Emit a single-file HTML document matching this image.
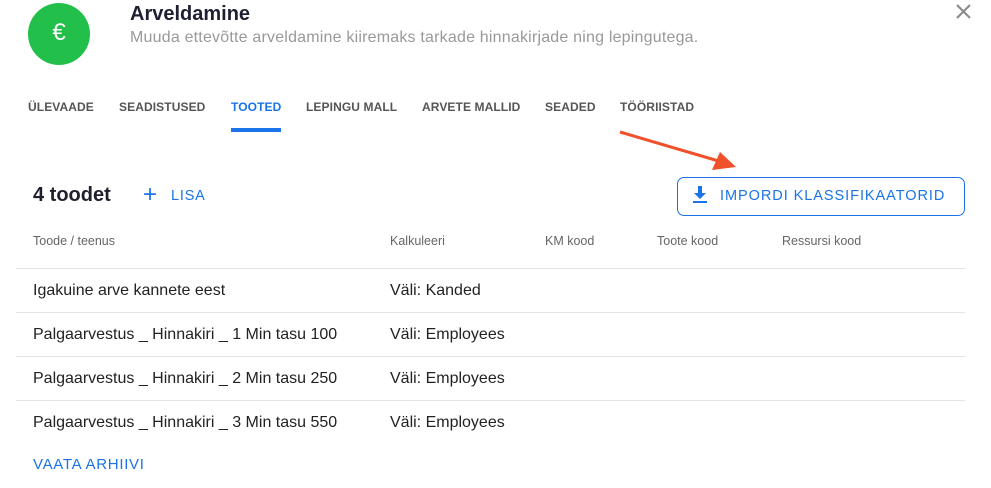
<!DOCTYPE html>
<html><head><meta charset="utf-8"><style>
*{margin:0;padding:0;box-sizing:border-box}
body{width:991px;height:488px;background:#fff;font-family:"Liberation Sans",sans-serif;position:relative;overflow:hidden;color:#1f1f2e}
.a{position:absolute;white-space:nowrap}
.tab{top:100px;font-size:12px;font-weight:bold;color:#555;letter-spacing:0.1px}
.th{top:234px;font-size:12.5px;color:#666}
.row{position:absolute;left:16px;width:949px;height:44px;border-top:1px solid #e4e4e4;font-size:16px;color:#222}
.row span{position:absolute;top:13px}
</style></head><body>
<div class="a" style="left:28px;top:3px;width:62px;height:62px;border-radius:50%;background:#22c04a;color:#fff;font-size:24px;text-align:center;line-height:60px">€</div>
<div class="a" style="left:130px;top:3px;font-size:20px;font-weight:bold;color:#1f1f33">Arveldamine</div>
<div class="a" style="left:130px;top:29px;font-size:16px;letter-spacing:0.2px;color:#999">Muuda ettevõtte arveldamine kiiremaks tarkade hinnakirjade ning lepingutega.</div>
<svg class="a" style="left:956px;top:4px" width="15" height="15"><path d="M1 1L14 14M14 1L1 14" stroke="#888" stroke-width="2"/></svg>
<div class="a tab" style="left:28px">ÜLEVAADE</div>
<div class="a tab" style="left:119px">SEADISTUSED</div>
<div class="a tab" style="left:231px;color:#1a73e8">TOOTED</div>
<div class="a" style="left:231px;top:128px;width:50px;height:4px;background:#1a73e8"></div>
<div class="a tab" style="left:306px">LEPINGU MALL</div>
<div class="a tab" style="left:422px">ARVETE MALLID</div>
<div class="a tab" style="left:545px">SEADED</div>
<div class="a tab" style="left:620px">TÖÖRIISTAD</div>
<svg class="a" style="left:0;top:0" width="991" height="488"><line x1="620" y1="132" x2="722" y2="162" stroke="#f0502a" stroke-width="3"/><polygon points="736,167 712,170 720,152" fill="#f0502a"/></svg>
<div class="a" style="left:33px;top:184px;font-size:20px;font-weight:bold">4 toodet</div>
<div class="a" style="left:143px;top:182px;font-size:24px;color:#1a73e8;line-height:26px">+</div>
<div class="a" style="left:171px;top:188px;font-size:14.5px;color:#1a73e8;letter-spacing:0.8px">LISA</div>
<div class="a" style="left:677px;top:177px;width:288px;height:39px;border:1px solid #1a73e8;border-radius:7px"></div>
<svg class="a" style="left:692px;top:186px" width="16" height="18"><path d="M6 0h4v7h4l-6 6-6-6h4z" fill="#1a73e8"/><rect x="1" y="15" width="14" height="2" fill="#1a73e8"/></svg>
<div class="a" style="left:720px;top:188px;font-size:14.5px;color:#1a73e8;letter-spacing:0.95px">IMPORDI KLASSIFIKAATORID</div>
<div class="a th" style="left:33px">Toode / teenus</div>
<div class="a th" style="left:390px">Kalkuleeri</div>
<div class="a th" style="left:545px">KM kood</div>
<div class="a th" style="left:657px">Toote kood</div>
<div class="a th" style="left:782px">Ressursi kood</div>
<div class="row" style="top:268px"><span style="left:17px">Igakuine arve kannete eest</span><span style="left:374px">Väli: Kanded</span></div>
<div class="row" style="top:312px"><span style="left:17px">Palgaarvestus _ Hinnakiri _ 1 Min tasu 100</span><span style="left:374px">Väli: Employees</span></div>
<div class="row" style="top:356px"><span style="left:17px">Palgaarvestus _ Hinnakiri _ 2 Min tasu 250</span><span style="left:374px">Väli: Employees</span></div>
<div class="row" style="top:400px"><span style="left:17px">Palgaarvestus _ Hinnakiri _ 3 Min tasu 550</span><span style="left:374px">Väli: Employees</span></div>
<div class="a" style="left:33px;top:456px;font-size:15px;color:#1a73e8;letter-spacing:0.7px">VAATA ARHIIVI</div>
</body></html>
